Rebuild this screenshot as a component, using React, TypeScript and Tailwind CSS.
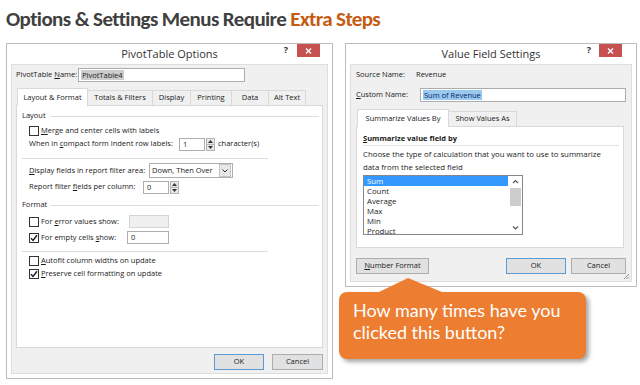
import React from "react";

const UI = "font-['Open_Sans',sans-serif] text-[7.5px] text-[#1a1a1a] whitespace-nowrap";

function U({ children }: { children: React.ReactNode }) {
  return <span className="underline underline-offset-[1px]">{children}</span>;
}

function Check({ checked }: { checked?: boolean }) {
  return (
    <span className="w-[10px] h-[10px] border border-[#333333] bg-white flex items-center justify-center shrink-0">
      {checked && (
        <svg width="8" height="8" viewBox="0 0 8 8">
          <path d="M1 4.3 L3 6.4 L7 1.2" stroke="#1a1a1a" strokeWidth="1.4" fill="none" />
        </svg>
      )}
    </span>
  );
}

function Spin({ value, w }: { value: string; w: string }) {
  return (
    <div className="flex items-stretch h-[13px] shrink-0">
      <div className={`${w} h-[13px] border border-[#abadb3] bg-white pl-[3px] leading-[11px]`}>{value}</div>
      <div className="w-[9px] ml-[1px] flex flex-col border border-[#b5b5b5] bg-[#e8e8e8]">
        <div className="flex-1 flex items-center justify-center">
          <svg width="5" height="3" viewBox="0 0 5 3"><path d="M0 3 L2.5 0 L5 3Z" fill="#333" /></svg>
        </div>
        <div className="h-px bg-[#b5b5b5]" />
        <div className="flex-1 flex items-center justify-center">
          <svg width="5" height="3" viewBox="0 0 5 3"><path d="M0 0 L2.5 3 L5 0Z" fill="#333" /></svg>
        </div>
      </div>
    </div>
  );
}

function TitleBar({ title, right, qgap }: { title: string; right: string; qgap: string }) {
  return (
    <div className="relative h-[20px] flex items-center justify-center shrink-0">
      <span className="font-['Open_Sans',sans-serif] text-[11px] text-[#333333]">{title}</span>
      <div className={`absolute ${right} top-0 flex items-start ${qgap}`}>
        <span className="font-['Open_Sans',sans-serif] text-[9px] font-bold text-[#333] leading-[12px]">?</span>
        <div className="w-[23px] h-[13px] bg-[#c75050] flex items-center justify-center">
          <svg width="7" height="6" viewBox="0 0 7 6">
            <path d="M1 0.5 L6 5.5 M6 0.5 L1 5.5" stroke="white" strokeWidth="1.4" />
          </svg>
        </div>
      </div>
    </div>
  );
}

function Btn({ children, w, def }: { children: React.ReactNode; w: string; def?: boolean }) {
  return (
    <div
      className={`${w} h-[16px] flex items-center justify-center bg-[#e1e1e1] border shrink-0 ${
        def ? "border-[#5b9bd5]" : "border-[#adadad]"
      }`}
    >
      {children}
    </div>
  );
}

function Tab({ children, w, sel }: { children: React.ReactNode; w: string; sel?: boolean }) {
  return sel ? (
    <div
      className={`${w} h-[18px] -mb-px bg-white border border-b-0 border-[#d9d9d9] flex items-center justify-center relative z-10`}
    >
      {children}
    </div>
  ) : (
    <div className={`${w} h-[15px] bg-[#f0f0f0] border border-b-0 border-[#d9d9d9] flex items-center justify-center -ml-px`}>
      {children}
    </div>
  );
}

function Header({ label }: { label: string }) {
  return (
    <div className="h-[10px] flex items-center pl-[5px] pr-[3px]">
      <span>{label}</span>
      <div className="flex-1 h-px bg-[#dcdcdc] ml-[4px]" />
    </div>
  );
}

function LeftDialog() {
  return (
    <div className={`${UI} w-[327px] h-[336px] border border-[#bcbcbc] bg-white flex flex-col shrink-0`}>
      <TitleBar title="PivotTable Options" right="right-[12px]" qgap="gap-[9px]" />
      <div className="mx-[4px] mb-[4px] flex-1 bg-[#f0f0f0] border border-[#dedede] px-[4px] flex flex-col">
        <div className="mt-[3px] h-[14px] flex items-center">
          <span className="w-[62px] shrink-0">
            PivotTable <U>N</U>ame:
          </span>
          <div className="w-[167px] h-[14px] border border-[#abadb3] bg-white flex items-center pl-[2px]">
            <span className="bg-[#cccccc] px-[1px] leading-[10px]">PivotTable4</span>
          </div>
        </div>
        <div className="mt-[5px] h-[18px] flex items-end pl-[1px]">
          <Tab w="w-[71px]" sel>
            Layout &amp; Format
          </Tab>
          <Tab w="w-[66px]">Totals &amp; Filters</Tab>
          <Tab w="w-[39px]">Display</Tab>
          <Tab w="w-[42px]">Printing</Tab>
          <Tab w="w-[38px]">Data</Tab>
          <Tab w="w-[38px]">Alt Text</Tab>
        </div>
        <div className="h-[243px] bg-white border border-[#d9d9d9] flex flex-col">
          <div className="mt-[5px]">
            <Header label="Layout" />
          </div>
          <div className="mt-[5px] h-[10px] flex items-center pl-[12px] gap-[2px]">
            <Check />
            <span>
              <U>M</U>erge and center cells with labels
            </span>
          </div>
          <div className="mt-[2px] h-[12px] flex items-center pl-[12px]">
            <span className="w-[150px] shrink-0">
              When in <U>c</U>ompact form indent row labels:
            </span>
            <Spin value="1" w="w-[26px]" />
            <span className="ml-[3px]">character(s)</span>
          </div>
          <div className="mt-[8px] ml-[5px] w-[246px] h-px bg-[#dcdcdc]" />
          <div className="mt-[4px] h-[15px] flex items-center pl-[12px]">
            <span className="w-[120px] shrink-0">
              <U>D</U>isplay fields in report filter area:
            </span>
            <div className="w-[84px] h-[15px] border border-[#abadb3] bg-white flex items-center shrink-0">
              <span className="flex-1 pl-[2px]">Down, Then Over</span>
              <div className="w-[12px] h-[13px] mr-px bg-[#e8e8e8] border border-[#c4c4c4] flex items-center justify-center">
                <svg width="6" height="4" viewBox="0 0 6 4">
                  <path d="M0.5 0.5 L3 3 L5.5 0.5" stroke="#333" strokeWidth="1" fill="none" />
                </svg>
              </div>
            </div>
          </div>
          <div className="mt-[2px] h-[14px] flex items-center pl-[12px]">
            <span className="w-[114px] shrink-0">
              Report filter <U>f</U>ields per column:
            </span>
            <Spin value="0" w="w-[26px]" />
          </div>
          <div className="mt-[6px]">
            <Header label="Format" />
          </div>
          <div className="mt-[5px] h-[13px] flex items-center pl-[12px]">
            <div className="w-[100px] shrink-0 flex items-center gap-[2px]">
              <Check />
              <span>
                For <U>e</U>rror values show:
              </span>
            </div>
            <div className="w-[40px] h-[13px] border border-[#d4d4d4] bg-[#f0f0f0]" />
          </div>
          <div className="mt-[3px] h-[13px] flex items-center pl-[12px]">
            <div className="w-[98px] shrink-0 flex items-center gap-[2px]">
              <Check checked />
              <span>
                For empty cells <U>s</U>how:
              </span>
            </div>
            <div className="w-[42px] h-[13px] border border-[#abadb3] bg-white pl-[3px] leading-[11px]">0</div>
          </div>
          <div className="mt-[7px] ml-[5px] w-[246px] h-px bg-[#dcdcdc]" />
          <div className="mt-[4px] h-[10px] flex items-center pl-[12px] gap-[2px]">
            <Check />
            <span>
              <U>A</U>utofit column widths on update
            </span>
          </div>
          <div className="mt-[3px] h-[10px] flex items-center pl-[12px] gap-[2px]">
            <Check checked />
            <span>
              <U>P</U>reserve cell formatting on update
            </span>
          </div>
        </div>
        <div className="mt-[6px] flex justify-end gap-[8px]">
          <Btn w="w-[50px]" def>
            OK
          </Btn>
          <Btn w="w-[51px]">Cancel</Btn>
        </div>
      </div>
    </div>
  );
}

function RightDialog() {
  const items = ["Sum", "Count", "Average", "Max", "Min", "Product"];
  return (
    <div className={`${UI} w-[292px] h-[244px] border border-[#bcbcbc] bg-white flex flex-col shrink-0 relative`}>
      <TitleBar title="Value Field Settings" right="right-[14px]" qgap="gap-[8px]" />
      <div className="mx-[4px] mb-[4px] flex-1 bg-[#f0f0f0] border border-[#dedede] px-[5px] flex flex-col relative">
        <div className="mt-[4px] h-[12px] flex items-center">
          <span className="w-[60px] shrink-0">Source Name:</span>
          <span>Revenue</span>
        </div>
        <div className="mt-[7px] h-[14px] flex items-center">
          <span className="w-[64px] shrink-0">
            <U>C</U>ustom Name:
          </span>
          <div className="flex-1 h-[14px] border border-[#abadb3] bg-white flex items-center pl-[2px]">
            <span className="bg-[#99c9ef] px-[1px] leading-[10px] text-[#0a246a]">Sum of Revenue</span>
          </div>
        </div>
        <div className="mt-[6px] h-[18px] flex items-end pl-[1px]">
          <Tab w="w-[92px]" sel>
            Summarize Values By
          </Tab>
          <Tab w="w-[69px]">Show Values As</Tab>
        </div>
        <div className="h-[122px] mr-[2px] bg-white border border-[#d9d9d9] flex flex-col pl-[6px] pr-[4px]">
          <div className="mt-[7px] h-[10px] flex items-center font-bold">
            <span>
              <U>S</U>ummarize value field by
            </span>
          </div>
          <div className="mt-[1px] h-px bg-[#e3e3e3]" />
          <div className="mt-[2px] leading-[13px] text-[7.8px]">
            Choose the type of calculation that you want to use to summarize
            <br />
            data from the selected field
          </div>
          <div className="mt-px w-[160px] h-[60px] border border-[#828790] bg-white flex text-[7.8px]">
            <div className="flex-1 flex flex-col">
              {items.map((it, i) => (
                <div
                  key={it}
                  className={`h-[10px] leading-[10px] pl-[3px] ${i === 0 ? "bg-[#3399ff] text-white" : ""}`}
                >
                  {it}
                </div>
              ))}
            </div>
            <div className="w-[14px] flex flex-col items-center">
              <svg width="7" height="10" viewBox="0 0 7 10" className="mt-[1px]">
                <path d="M1 6 L3.5 3.5 L6 6" stroke="#555" strokeWidth="1.2" fill="none" />
              </svg>
              <div className="w-[11px] h-[18px] bg-[#cdcdcd] mt-[1px]" />
              <div className="flex-1" />
              <svg width="7" height="10" viewBox="0 0 7 10" className="mb-[1px]">
                <path d="M1 3.5 L3.5 6 L6 3.5" stroke="#555" strokeWidth="1.2" fill="none" />
              </svg>
            </div>
          </div>
        </div>
        <div className="mt-[10px] flex items-center">
          <Btn w="w-[73px]">
            <span>
              <U>N</U>umber Format
            </span>
          </Btn>
          <div className="flex-1" />
          <Btn w="w-[60px]" def>
            OK
          </Btn>
          <div className="w-[5px]" />
          <Btn w="w-[55px]">Cancel</Btn>
        </div>
        <svg width="8" height="8" viewBox="0 0 8 8" className="absolute right-px bottom-px">
          <path d="M7 2 L2 7 M7 4.5 L4.5 7 M7 6.5 L6.5 7" stroke="#9a9a9a" strokeWidth="1" />
        </svg>
      </div>
    </div>
  );
}

function Callout() {
  return (
    <div className="absolute left-[339px] top-[278px] w-[250px]">
      <svg width="70" height="14" viewBox="0 0 70 14" className="ml-[40px] block">
        <path d="M0 14 L29 0 L63 14 Z" fill="#ed7d31" />
      </svg>
      <div className="w-[247px] h-[67px] rounded-[8px] bg-[#ed7d31] shadow-[3px_3px_4px_rgba(0,0,0,0.35)] pl-[14px] pt-[7px] font-['Lato',sans-serif] text-[18px] leading-[22px] text-white">
        How many times have you
        <br />
        clicked this button?
      </div>
    </div>
  );
}

export default function App() {
  return (
    <div className="w-[640px] h-[385px] bg-white relative overflow-hidden">
      <div className="h-[43px] pl-[6px] pt-[6px] font-['Carlito','Lato',sans-serif] text-[21px] leading-[26px] font-bold text-[#404040] tracking-[-0.6px] whitespace-nowrap">
        Options &amp; Settings Menus Require <span className="text-[#c55a11]">Extra Steps</span>
      </div>
      <div className="flex items-start pl-[6px] gap-[12px]">
        <LeftDialog />
        <RightDialog />
      </div>
      <Callout />
    </div>
  );
}
